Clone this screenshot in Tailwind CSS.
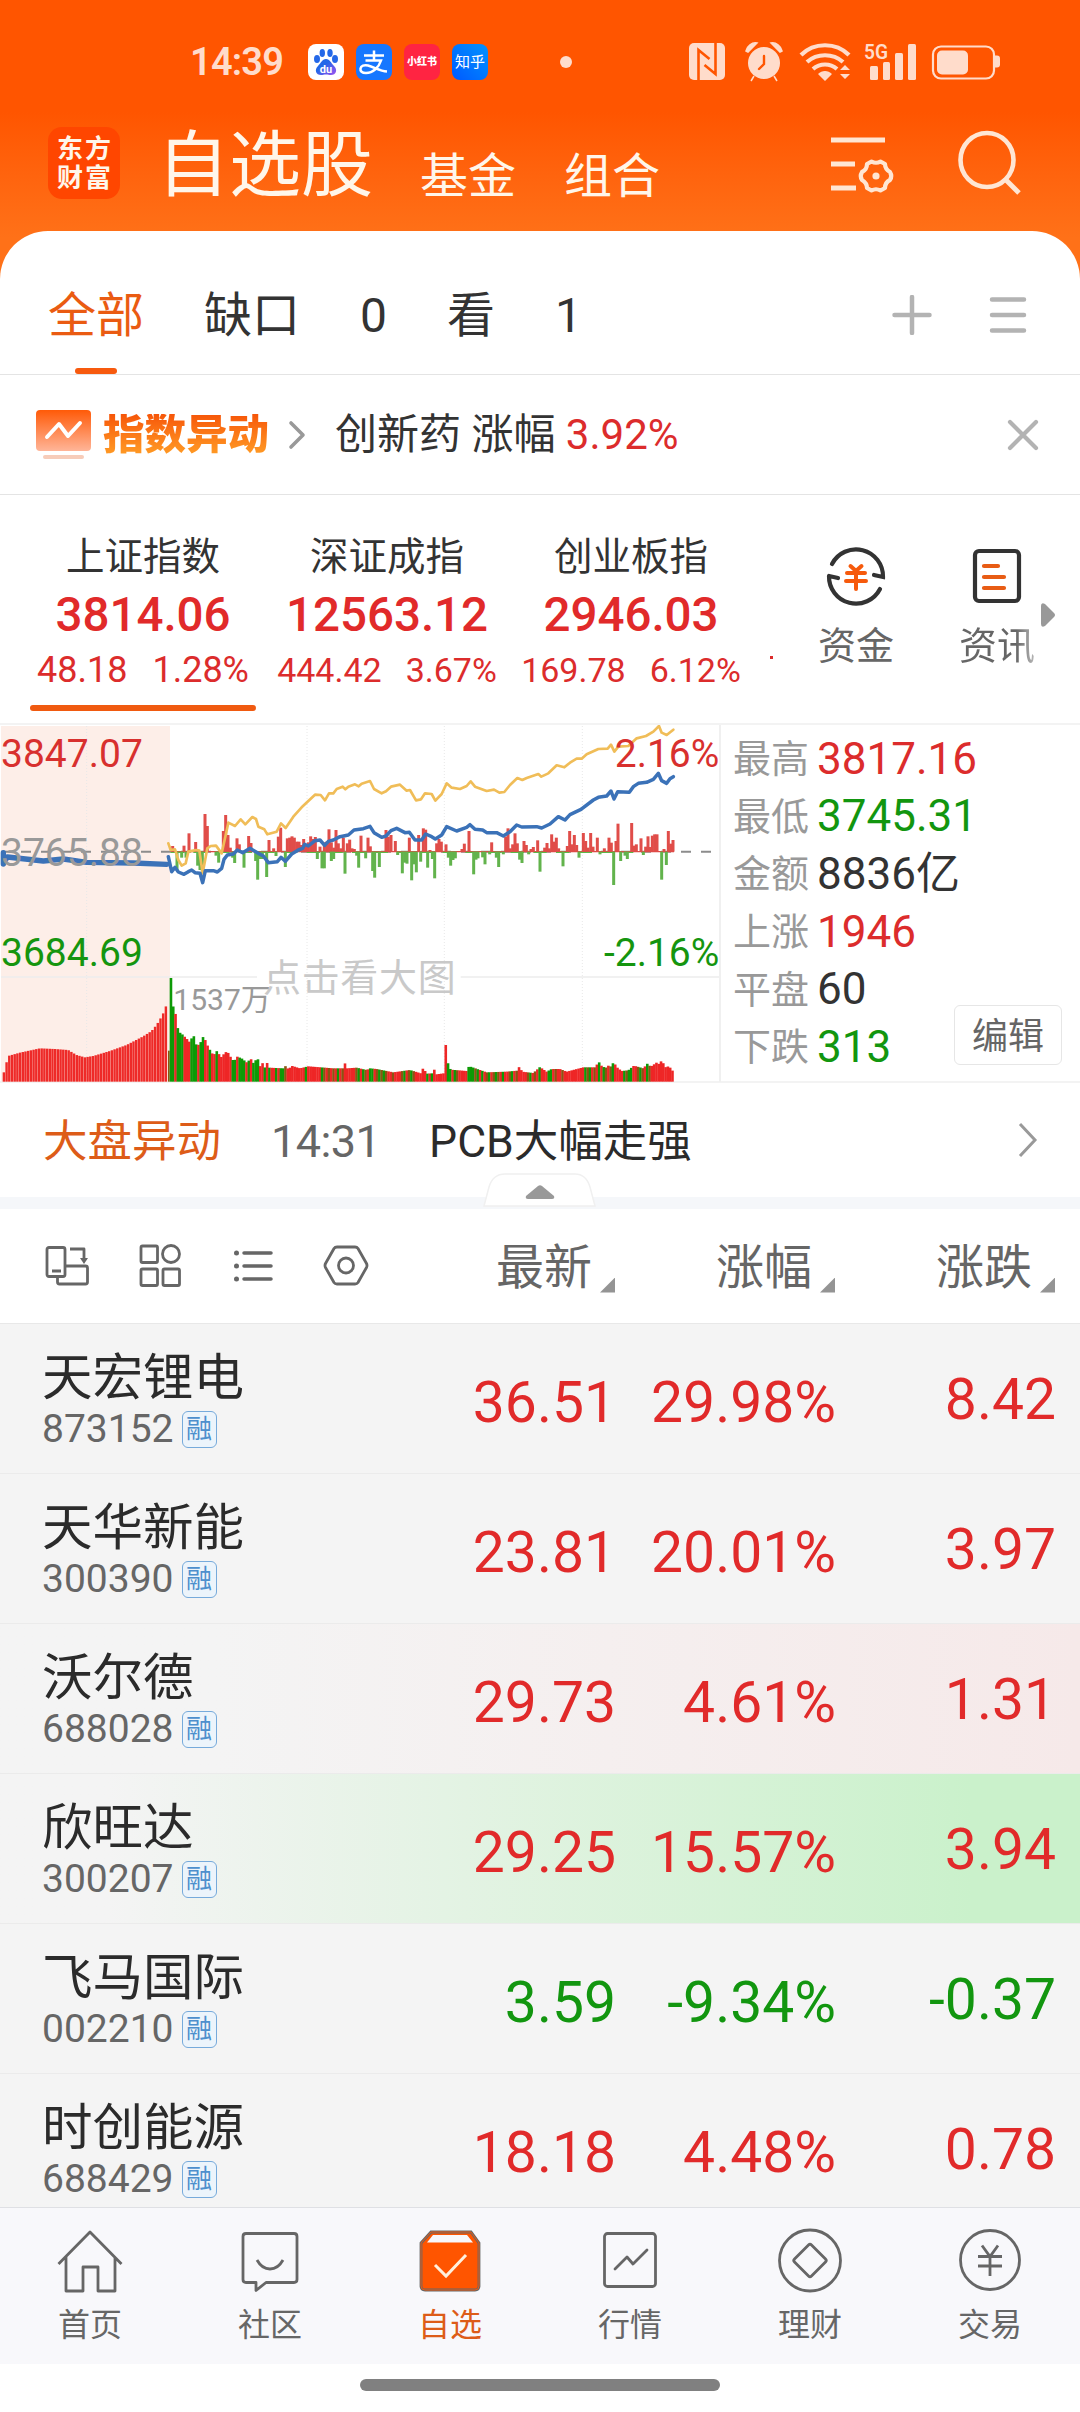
<!DOCTYPE html>
<html lang="zh-CN">
<head>
<meta charset="utf-8">
<title>自选股</title>
<script src="https://cdn.jsdelivr.net/npm/@tailwindcss/browser@4"></script>
</head>
<body class="w-[1080px] h-[2412px] overflow-hidden bg-white leading-none text-[#333] font-['Roboto','Noto_Sans_CJK_SC',sans-serif] whitespace-nowrap">
<div class="flex h-[2412px] flex-col">

<!-- status bar + header -->
<header class="h-[280px] shrink-0 bg-linear-to-b from-[#ff5500] from-40% to-[#ff7118] to-85%">
  <div class="flex h-[124px] items-center pl-[190px]">
    <div class="w-[118px] text-[38px] font-semibold tracking-[-0.8px] text-[#ffdccb]">14:39</div>
    <div class="flex gap-3">
      <svg class="size-9" viewBox="0 0 36 36"><defs><linearGradient id="bd" x1="0" y1="0" x2="1" y2="1"><stop offset=".4" stop-color="#2468e8"/><stop offset="1" stop-color="#a050f0"/></linearGradient></defs><rect width="36" height="36" rx="8" fill="#fff"/><g fill="#2468e8"><ellipse cx="9" cy="15" rx="3" ry="4"/><ellipse cx="14.300" cy="9" rx="2.700" ry="4"/><ellipse cx="22" cy="9" rx="2.700" ry="4"/><ellipse cx="27" cy="15" rx="3" ry="4"/></g><path d="M18 15c4 0 5 4 8 7 4 4 2 9-3 9-2 0-3-.5-5-.5s-3 .5-5 .5c-5 0-7-5-3-9 3-3 4-7 8-7z" fill="url(#bd)"/><text x="18" y="28.500" font-size="11" font-weight="700" text-anchor="middle" fill="#fff" font-family="Roboto">du</text></svg>
      <svg class="size-9" viewBox="0 0 36 36"><rect width="36" height="36" rx="8" fill="#1677ff"/><path d="M8 11.500h20M18 6.500v10M9.500 16.500H25C23 23 17 29 10 29c-4 0-6-2-5.500-4.500C5 22 8 20.500 12 21.500 18 23 24 27 31 27.500" fill="none" stroke="#fff" stroke-width="2.500"/></svg>
      <div class="flex size-9 items-center justify-center rounded-lg bg-[#ff2442] text-[10px] font-black text-white">小红书</div>
      <div class="flex size-9 items-center justify-center rounded-lg bg-linear-to-tr from-[#0058ff] to-[#0092ff] text-[15px] text-white">知乎</div>
    </div>
    <div class="ml-[72px] size-3 rounded-full bg-[#ffdccb]"></div>
    <svg class="ml-[117px] h-10 w-[312px] overflow-visible" viewBox="0 0 312 40" fill="#ffdccb">
      <rect y="1" width="36" height="37" rx="5"/><path d="M9.500 38V8l11 9M26.500 1v31l-11-9" fill="none" stroke="#ff5500" stroke-width="2.600"/>
      <circle cx="75" cy="21" r="16"/><path d="M75 14v8l-5 5" fill="none" stroke="#ff5500" stroke-width="2.400" stroke-linecap="round"/><path d="M57 9c1-5 6-9 11-8l-9 9zM93 9c-1-5-6-9-11-8l9 9zM65 34l-3 5M85 34l3 5" stroke="#ffdccb" stroke-width="1.500"/>
      <g fill="none" stroke="#ffdccb" stroke-width="4.200"><path d="M112 13c13-13 35-13 48 0M118 20c10-9 26-9 36 0M124 27c7-6 17-6 24 0"/></g><path d="M129 32c4-4 10-4 14 0l-7 7zM151 28l5-5 5 5zM151 32l5 5 5-5z"/>
      <text x="175" y="16.500" font-size="21" font-weight="600" font-family="Roboto" textLength="24" lengthAdjust="spacingAndGlyphs">5G</text>
      <rect x="181" y="24" width="8" height="14" rx="1.500"/><rect x="194" y="20" width="7" height="18" rx="1.500"/><rect x="206" y="11" width="8" height="27" rx="1.500"/><rect x="219" y="2" width="8" height="36" rx="1.500"/>
      <rect x="244" y="4.500" width="61" height="32" rx="8" fill="none" stroke="#ffdccb" stroke-width="2.200"/><rect x="248" y="8.500" width="31" height="24" rx="5"/><path d="M306 13.500h2q3 0 3 3v6q0 3-3 3h-2z"/>
    </svg>
  </div>
  <div class="flex h-[107px] pl-12 text-[#fff6ea]">
    <div class="mt-[3px] grid size-18 grid-cols-2 place-content-center justify-items-center gap-x-0.5 gap-y-[3px] rounded-[14px] bg-[#ff4600] px-[9px] text-[26px] font-bold"><span>东</span><span>方</span><span>财</span><span>富</span></div>
    <div class="ml-[37px] mt-[5.500px] text-[72px]">自选股</div>
    <div class="ml-[47px] mt-[29px] text-[48px]">基金</div>
    <div class="ml-12 mt-[29px] text-[48px]">组合</div>
    <svg class="ml-[171px] mt-[11px] h-[60px] w-[66px]" viewBox="0 0 66 60" fill="none" stroke="#ffe6d3" stroke-width="5"><path d="M0 5h54M0 29h24M0 53h25"/><path d="M40.500 26.500Q45 29 49.500 26.500L54 29Q54 34 59 37Q61.500 41 59 45Q54 47.500 54 53L49.500 55.500Q45 53 40.500 55.500L36 53Q36 48 31 45Q28.500 41 31 37Q36 34.500 36 29Z" stroke-width="4.200" stroke-linejoin="round"/><circle cx="45" cy="41" r="3.600" fill="#ffe6d3" stroke="none"/></svg>
    <svg class="ml-[60px] mt-[5px] h-[68px] w-[66px]" viewBox="0 0 66 68" fill="none" stroke="#ffe6d3" stroke-width="4.600"><ellipse cx="30" cy="31" rx="26.500" ry="27"/><path d="M49 51l13 13" stroke-width="5"/></svg>
  </div>
</header>

<!-- group tabs -->
<nav class="-mt-[49px] flex h-36 shrink-0 items-center rounded-t-[48px] border-b border-[#e4e4e4] bg-white pl-12 pt-6 text-[48px]">
  <div class="flex h-full items-center gap-[60px] pt-[3px]">
    <div class="relative flex h-full items-center text-[#ea5b12]">全部<i class="absolute bottom-0 left-[27px] h-1.5 w-[42px] rounded-full bg-[#f75a0e]"></i></div>
    <div>缺口</div><div>0</div><div>看</div><div>1</div>
  </div>
  <svg class="ml-[310px] size-[40px]" viewBox="0 0 40 40" stroke="#b3b3b3" stroke-width="4.500" stroke-linecap="round"><path d="M20 2v36M2.500 20h35"/></svg>
  <svg class="ml-[57px] size-[40px]" viewBox="0 0 40 40" stroke="#b3b3b3" stroke-width="4.500" stroke-linecap="round"><path d="M3 4.500h32M3 20h32M3 35.500h32"/></svg>
</nav>

<!-- index alert -->
<section class="flex h-[120px] shrink-0 items-center border-b border-[#e4e4e4] pl-9 pt-px text-[42px]">
  <svg class="h-[50px] w-[55px]" viewBox="0 0 55 50"><defs><linearGradient id="al" x2="0" y2="1"><stop stop-color="#ff5a08"/><stop offset="1" stop-color="#ffb598"/></linearGradient></defs><rect width="55" height="41" rx="4" fill="url(#al)"/><path d="M11 27l12-13 9 12 12-13" fill="none" stroke="#fff" stroke-width="4" stroke-linecap="round" stroke-linejoin="round"/><rect x="7" y="45" width="41" height="4" rx="2" fill="#f7ccb9"/></svg>
  <div class="ml-3 bg-linear-to-b from-[#f65508] to-[#ff9c25] bg-clip-text text-[41.500px] font-black text-transparent">指数异动</div>
  <svg class="ml-[19px] h-[30px] w-5" viewBox="0 0 20 30" fill="none" stroke="#999" stroke-width="3.600" stroke-linecap="round" stroke-linejoin="round"><path d="M3 3l12 12L3 27"/></svg>
  <div class="ml-[27px]">创新药 涨幅 <span class="text-[#dc2c2c]">3.92%</span></div>
  <svg class="ml-auto mr-10 size-[34px]" viewBox="0 0 34 34" stroke="#b3b3b3" stroke-width="4.200" stroke-linecap="round"><path d="M4 4l26 26M30 4L4 30"/></svg>
</section>

<!-- indices -->
<section class="flex h-[228px] shrink-0">
  <div class="flex w-[788px] pl-[21px] pt-[43px] text-[#dc2c2c]">
    <div class="flex w-[244px] flex-col items-center">
      <div class="text-[38.500px] text-[#333]">上证指数</div><div class="mt-[15px] text-[47.500px] font-medium text-[#e12a2a]">3814.06</div><div class="mt-[13px] flex gap-[25px] text-[36px]"><span>48.18</span><span>1.28%</span></div><i class="mt-[16.500px] h-1.5 w-[226px] shrink-0 rounded-full bg-[#f05a10]"></i>
    </div>
    <div class="flex w-[244px] flex-col items-center">
      <div class="text-[38.500px] text-[#333]">深证成指</div><div class="mt-[15px] text-[47.500px] font-medium text-[#e12a2a]">12563.12</div><div class="mt-[14px] flex gap-6 text-[34px]"><span>444.42</span><span>3.67%</span></div>
    </div>
    <div class="flex w-[244px] flex-col items-center">
      <div class="text-[38.500px] text-[#333]">创业板指</div><div class="mt-[15px] text-[47.500px] font-medium text-[#e12a2a]">2946.03</div><div class="mt-[14px] flex gap-6 text-[34px]"><span>169.78</span><span>6.12%</span></div>
    </div>
    <i class="ml-[17px] mt-[118px] h-[3px] w-[3px] bg-[#dc2c2c]"></i>
  </div>
  <div class="flex flex-1 pt-[49px] text-[38px] text-[#666]">
    <div class="flex w-[136px] flex-col items-center gap-[19px]">
      <svg class="size-16" viewBox="0 0 64 64" fill="none" stroke="#333" stroke-width="4.200" stroke-linecap="round"><path d="M8 20A27 27 0 0 1 59 33L50 31M5 32L14 34M5 32A27 27 0 0 0 56 45"/><path d="M26.500 22l5.500 5 5.500-5M23 29h18M22 37h20M32 27v18" stroke="#f65a0c" stroke-width="4"/></svg>
      <div>资金</div>
    </div>
    <div class="ml-[5px] flex w-[136px] flex-col items-center gap-[19px]">
      <svg class="size-16" viewBox="0 0 64 64" fill="none" stroke="#333" stroke-width="4.200" stroke-linecap="round"><rect x="10" y="7" width="44" height="50" rx="4"/><path d="M19 22h14M19 33h20M19 44h20" stroke="#e85c14"/></svg>
      <div class="bg-linear-to-r from-[#666] from-75% to-[#bbb] bg-clip-text text-transparent">资讯</div>
    </div>
    <svg class="-ml-[25px] mt-[58px] h-[26px] w-4" viewBox="0 0 16 26"><path d="M1 4q0-4 4-2l9 9q2 2 0 4l-9 9q-4 2-4-2z" fill="#999"/></svg>
  </div>
</section>

<!-- chart + figures -->
<section class="flex h-[360px] shrink-0 border-y-2 border-[#f3f3f3]">
  <svg class="h-[357px] w-[721px]" viewBox="0 15 2163 1071" font-family="Roboto, 'Noto Sans CJK SC', sans-serif">
    <rect x="3" y="18" width="507" height="1067" fill="#fdeee8"/>
    <g stroke="#e8e8e8" stroke-width="3" stroke-dasharray="3 6"><path d="M260 18V1085M921 18V1085M1333 18V1085M1747 18V1085"/></g>
    <path d="M3 771H771M1382 771H2160" stroke="#ededed" stroke-width="5"/>
    <path d="M2160 15V1086" stroke="#f0f0f0" stroke-width="6"/>
    <path d="M3 395H2140" stroke="#8c8c8c" stroke-width="6" stroke-dasharray="30 30"/>
    <g id="flow"></g>
    <g id="vol"></g>
    <g fill="none" stroke-linejoin="round" stroke-linecap="round">
      <path stroke="#f0bd58" stroke-width="8" d="M505 370L512 390 525 388 535 420 545 437 557 430 565 395 588 390 598 392 608 460 622 385 632 378 648 377 665 400 676 350 685 308 705 318 722 298 736 313 757 291 768 297 775 320 793 328 802 343 830 335 843 310 857 324 880 290 905 262 945 224 962 225 975 241 987 220 1000 220 1010 207 1028 200 1036 208 1045 200 1065 193 1076 199 1085 191 1110 183 1122 207 1145 220 1158 214 1173 200 1200 194 1220 212 1230 210 1248 241 1263 238 1275 220 1295 222 1306 242 1325 222 1340 190 1355 203 1380 207 1400 198 1412 184 1425 200 1460 213 1482 209 1498 218 1513 216 1530 195 1552 174 1567 180 1580 174 1615 162 1624 170 1645 160 1670 136 1693 142 1710 128 1730 116 1745 116 1760 103 1795 87 1823 86 1833 74 1843 95 1855 80 1885 78 1910 55 1938 48 1960 35 1977 18 1985 38 2000 45 2020 29"/>
      <path stroke="#3b72b8" stroke-width="16" d="M10 398V432M12 428L22 411 130 423 190 417 260 427 400 429 500 433"/><path stroke="#3b72b8" stroke-width="10.500" d="M505 410L515 455 525 442 535 456 552 463 565 455 575 450 585 458 600 460 608 488 616 452 640 452 652 456 665 445 672 418 682 405 700 402 712 390 728 398 750 385 775 400 790 408 805 428 832 425 843 412 856 424 875 402 895 390 908 385 914 373 925 378 945 362 960 360 974 376 985 364 1000 360 1020 350 1045 345 1062 330 1090 326 1110 319 1122 338 1145 352 1158 348 1173 332 1190 325 1215 338 1228 337 1245 360 1265 360 1277 342 1295 350 1306 357 1325 345 1340 320 1370 333 1400 322 1410 314 1425 328 1448 330 1460 338 1490 338 1510 348 1530 335 1550 315 1565 321 1610 320 1625 324 1650 312 1675 290 1695 300 1710 284 1743 268 1780 240 1795 232 1820 228 1833 213 1842 237 1853 215 1888 217 1900 200 1915 190 1940 187 1960 178 1975 160 1985 182 2000 190 2010 176 2020 170"/>
    </g>
    <g font-size="117">
      <text x="3" y="141" fill="#d8302e">3847.07</text><text x="3" y="437" fill="#999">3765.88</text><text x="3" y="738" fill="#15950f">3684.69</text>
      <text x="2158" y="141" fill="#d8302e" text-anchor="end">2.16%</text><text x="2158" y="738" fill="#15950f" text-anchor="end">-2.16%</text>
      <text x="520" y="869" font-size="90" fill="#999">1537万</text><text x="789" y="813" font-size="114" fill="#c9c9c9" textLength="578">点击看大图</text>
    </g>
  </svg>
  <div class="relative flex-1 pl-3 pt-[5px] text-[44px]">
    <dl class="grid auto-rows-[57.600px] grid-cols-[84px_auto] items-center [&_dt]:pt-px [&_dt]:text-[38px] [&_dt]:text-[#999]">
      <dt>最高</dt><dd class="text-[#dc2c2c]">3817.16</dd>
      <dt>最低</dt><dd class="text-[#12960f]">3745.31</dd>
      <dt>金额</dt><dd>8836亿</dd>
      <dt>上涨</dt><dd class="text-[#dc2c2c]">1946</dd>
      <dt>平盘</dt><dd>60</dd>
      <dt>下跌</dt><dd class="text-[#12960f]">313</dd>
    </dl>
    <button class="absolute bottom-[16px] right-[18px] flex h-[60px] w-[108px] items-center justify-center rounded-md border border-[#e6e6e6] bg-white pt-1 text-[36px] text-[#666]">编辑</button>
  </div>
</section>

<!-- market news -->
<section class="relative flex h-[126px] shrink-0 items-center border-b-12 border-[#f5f7fa] pl-[43px] text-[44.500px]">
  <div class="pt-[5px] text-[#dd5c18]">大盘异动</div><div class="ml-[50px] pt-0.5 text-[45px] tracking-[-0.6px] text-[#666]">14:31</div><div class="ml-[49px] pt-[5px] text-[#2b2b2b]">PCB大幅走强</div>
  <svg class="ml-auto mr-[42px] h-9 w-5" viewBox="0 0 20 36" fill="none" stroke="#999" stroke-width="3"><path d="M2 2l15 16L2 34"/></svg>
  <svg class="absolute -bottom-[10px] left-[483px] h-[34px] w-[113px]" viewBox="0 0 113 34"><path d="M1 33L6 14Q10 1 22 1H92Q103 1 107 14L112 33Z" fill="#fff" stroke="#f0f0f0" stroke-width="1.500"/><path d="M43 23l12-10q2-1.500 4 0l12 10q1 3-2 3H45q-3 0-2-3z" fill="#999"/></svg>
</section>

<!-- column headings -->
<section class="flex h-[115px] shrink-0 items-center border-b border-[#e8e8e8] pl-11 text-[48px] text-[#666]">
  <svg class="h-[50px] w-[330px]" viewBox="0 0 330 50" fill="none" stroke="#666" stroke-width="2.800" stroke-linejoin="round">
    <rect x="3" y="6.500" width="18" height="29" rx="2"/><path d="M8 30h9M26 8h14v11M13.500 36v5q0 2 2 2h26q2 0 2-2V27q0-2-2-2H21"/><path d="M36 17h8l-4 6z" fill="#666" stroke="none"/>
    <rect x="97" y="5" width="16.500" height="16.500" rx="1.500"/><circle cx="127" cy="13" r="8.500"/><rect x="97" y="28" width="16.500" height="16.500" rx="1.500"/><rect x="119" y="28" width="16.500" height="16.500" rx="1.500"/>
    <path d="M200 12h27M200 25h27M200 38h27" stroke-width="3.500" stroke-linecap="round"/><path d="M192.500 12h0M192.500 25h0M192.500 38h0" stroke-width="5" stroke-linecap="round"/>
    <path transform="translate(1 0)" d="M292 6h18q2 0 3 1.500l8.500 15q1 2 0 4l-8.500 15q-1 1.500-3 1.500h-18q-2 0-3-1.500l-8.500-15q-1-2 0-4l8.500-15q1-1.500 3-1.500z"/><circle cx="302" cy="24.500" r="7.500"/>
  </svg>
  <div class="ml-[122px] flex gap-[108px] pt-[3px]">
    <div class="flex w-[112px] items-end gap-2">最新<i class="mb-[-1px] h-[15px] w-[15px] shrink-0 bg-[#949494] [clip-path:polygon(100%_0,100%_100%,0_100%)]"></i></div>
    <div class="flex w-[112px] items-end gap-2">涨幅<i class="mb-[-1px] h-[15px] w-[15px] shrink-0 bg-[#949494] [clip-path:polygon(100%_0,100%_100%,0_100%)]"></i></div>
    <div class="flex w-[112px] items-end gap-2">涨跌<i class="mb-[-1px] h-[15px] w-[15px] shrink-0 bg-[#949494] [clip-path:polygon(100%_0,100%_100%,0_100%)]"></i></div>
  </div>
</section>

<main id="list" class="h-[883px] shrink-0 overflow-hidden bg-[#f4f4f4]"></main>

<!-- bottom navigation -->
<nav class="grid h-[157px] shrink-0 grid-cols-6 border-t border-[#dfe0e4] bg-[#f8f8fb] pt-[18px] text-[32px] text-[#666] [&>div]:flex [&>div]:flex-col [&>div]:items-center [&>div]:gap-[15px] [&_svg]:size-[68px] [&_svg]:fill-none [&_svg]:stroke-[#666] [&_svg]:stroke-[2.800]">
  <div><svg viewBox="0 0 68 68"><path d="M2.500 38L34 6l31.500 32M10 31v34h17V41h15v24h17V31" stroke-linejoin="round"/></svg>首页</div>
  <div><svg viewBox="0 0 68 68"><path d="M10 7.500h48q3 0 3 3v43q0 3-3 3H30l-10 8v-8H10q-3 0-3-3v-43q0-3 3-3zM21 34q5 9 13 9t13-9" stroke-linejoin="round"/></svg>社区</div>
  <div class="text-[#dd5c18]"><svg viewBox="0 0 68 68"><path d="M5 17L15 6h40l8 11v43q0 4-4 4H9q-4 0-4-4z" fill="#ff5500"/><path d="M11 16.500L17 9h34l6 7.500z" fill="#f8f8fb" stroke="none"/><path d="M19 39l11 11 20-21" stroke="#fff0dc" stroke-width="3"/><path d="M5 17L15 6h40l8 11v43q0 4-4 4H9q-4 0-4-4z" stroke="#f05a10" stroke-width="1"/></svg>自选</div>
  <div><svg viewBox="0 0 68 68"><rect x="8.500" y="7.500" width="51" height="53" rx="3"/><path d="M19 43l12-12 6 7 14-14" stroke-linecap="round" stroke-linejoin="round"/></svg>行情</div>
  <div><svg viewBox="0 0 68 68"><circle cx="34" cy="34.500" r="30.500"/><path d="M32.500 19q1.500-1.500 3 0l14 14q1.500 1.500 0 3l-14 14q-1.500 1.500-3 0l-14-14q-1.500-1.500 0-3z"/></svg>理财</div>
  <div><svg viewBox="0 0 68 68"><circle cx="34" cy="34" r="29.500"/><path d="M26 19.500l8 11 8-11M22 30.500h24M22 40h24M34 30v20"/></svg>交易</div>
</nav>
<div class="flex h-12 shrink-0 justify-center pt-[15px]"><i class="h-3 w-[360px] rounded-full bg-[#808080]"></i></div>
</div>

<script>
  // watch list rows
  const rows = [
    ['天宏锂电', '873152', '36.51', '29.98%', '8.42', ''],
    ['天华新能', '300390', '23.81', '20.01%', '3.97', ''],
    ['沃尔德', '688028', '29.73', '4.61%', '1.31', 'bg-linear-to-r from-[#f4f4f4] from-20% to-[#f6e9e9]'],
    ['欣旺达', '300207', '29.25', '15.57%', '3.94', 'bg-linear-to-r from-[#f4f4f4] from-10% to-[#caf1cb] to-90%'],
    ['飞马国际', '002210', '3.59', '-9.34%', '-0.37', ''],
    ['时创能源', '688429', '18.18', '4.48%', '0.78', '']
  ];
  document.getElementById('list').innerHTML = rows.map(([name, code, price, pct, chg, bg]) => `
    <div class="flex h-[150px] border-b border-[#ebebeb] pl-[42px] ${bg}">
      <div class="w-[330px] pt-[29px]">
        <div class="text-[50.500px] text-[#2b2b2b]">${name}</div>
        <div class="mt-[6px] flex items-center text-[39px] text-[#666]">${code}<span class="ml-2 flex h-[37px] w-[35px] items-center justify-center rounded-md border-[1.5px] border-[#76aadb] bg-[#ecf4fb] text-[26px] text-[#4d8fcd]">融</span></div>
      </div>
      <div class="flex flex-1 pt-[49.500px] text-right text-[57px] ${pct[0] === '-' ? 'text-[#12960f]' : 'text-[#e12a2a]'}">
        <div class="w-[244px]">${price}</div><div class="w-[220px]">${pct}</div><div class="-mt-[3px] w-[220px]">${chg}</div>
      </div>
    </div>`).join('');

  // chart: net flow bars, [x, height] with negative heights drawn downwards
  const flow = [518,17,552,18,567,55,587,29,615,113,622,77,670,62,677,110,684,50,691,12,711,40,718,22,746,47,753,26,760,6,807,35,821,10,835,45,842,72,862,40,869,42,876,46,883,42,890,30,897,30,904,20,911,38,918,20,925,28,932,46,939,38,946,44,960,15,973,28,980,30,987,67,994,28,1001,12,1008,65,1015,25,1022,10,1030,42,1042,25,1049,36,1056,10,1063,8,1083,48,1104,42,1111,16,1158,65,1165,45,1173,50,1186,32,1228,42,1256,50,1270,70,1277,66,1290,5,1310,25,1317,38,1324,30,1338,22,1386,8,1393,24,1407,62,1475,28,1517,45,1524,70,1531,10,1538,22,1545,55,1552,25,1572,32,1579,20,1593,8,1600,14,1613,34,1634,12,1641,26,1648,10,1655,52,1662,30,1669,42,1676,10,1702,17,1709,62,1716,22,1723,50,1730,20,1750,56,1757,32,1764,12,1772,56,1779,15,1792,42,1813,10,1827,42,1834,27,1848,32,1854,84,1895,86,1902,18,1909,22,1923,40,1937,15,1944,46,1950,14,1957,48,1964,52,1971,52,1992,8,2005,62,2012,24,2019,35,
    531,-55,545,-18,558,-18,593,-42,600,-55,607,-65,648,-12,656,-33,698,-18,704,-34,732,-48,767,-28,773,-84,780,-22,787,-22,800,-76,828,-13,856,-46,952,-22,966,-50,973,-50,994,-28,1001,-22,1035,-66,1070,-12,1076,-48,1097,-20,1118,-58,1124,-78,1138,-46,1193,-10,1207,-65,1214,-33,1221,-36,1235,-86,1242,-38,1249,-62,1262,-30,1283,-48,1297,-22,1304,-80,1345,-18,1352,-42,1359,-25,1366,-20,1421,-68,1428,-24,1434,-20,1448,-17,1455,-38,1469,-8,1489,-18,1496,-46,1510,-8,1559,-24,1566,-34,1586,-8,1620,-60,1689,-44,1737,-18,1800,-8,1841,-100,1862,-28,1875,-12,1882,-22,1930,-10,1985,-84,1999,-40];
  let s = '<path d="M512 395H2022" stroke="#dc4a45" stroke-width="4"/><path d="M512 397H1900" stroke="#5cb748" stroke-width="4" stroke-dasharray="40 28"/>';
  for (let i = 0; i < flow.length; i += 2) {
    const x = flow[i], h = flow[i + 1];
    s += `<rect x="${x - 4.5}" y="${h > 0 ? 395 - h : 395}" width="9" height="${Math.abs(h)}" fill="${h > 0 ? '#e04d49' : '#62b34c'}"/>`;
  }
  document.getElementById('flow').innerHTML = s;

  // chart: volume bars interpolated between key heights
  const at = (k, x) => { let i = 2; while (i < k.length - 2 && k[i] < x) i += 2; const t = (x - k[i - 2]) / (k[i] - k[i - 2]); return k[i - 1] + (k[i + 1] - k[i - 1]) * Math.max(0, Math.min(1, t)); };
  const pre = [12,28,20,58,28,78,60,87,120,100,165,98,205,95,230,80,255,73,280,77,330,92,380,110,430,136,455,152,470,170,485,195,495,215,502,240];
  const post = [513,311,519,228,526,208,533,162,540,147,547,142,554,135,561,128,568,120,575,130,581,139,588,112,595,110,602,118,609,134,616,125,622,110,629,97,636,85,643,82,650,92,657,83,664,74,677,89,688,85,695,65,705,65,712,75,725,70,740,58,753,68,760,56,773,71,780,45,787,57,795,42,802,57,807,42,850,40,856,47,865,38,877,47,900,40,925,46,1000,40,1030,40,1035,55,1042,40,1070,42,1100,35,1110,40,1130,38,1180,28,1230,35,1263,25,1270,42,1280,24,1297,25,1303,36,1310,22,1331,25,1337.4,110,1344.3,55,1352,36,1400,32,1407,46,1415,44,1460,28,1520,30,1552,33,1559,47,1566,30,1600,26,1620,44,1640,30,1655,38,1680,38,1700,30,1750,43,1785,43,1792,53,1799,59,1806,45,1820,42,1827,50,1834,44,1841,60,1850,44,1865,32,1885,34,1902,48,1930,40,1944,56,1951,44,1971,58,1978,52,1985,64,1992,52,1999,40,2006,48,2020,30];
  const tones = [...'GGRGGGRRRGGGRGGRRGRRGRRRRRRGGRGGGRGRGGGRRGRGRRGRGGBRRRRRRRRGRRRRRRGBRBRBRGRBRRRRRBGRGBRGGRBGBGBRRBRRRBGRBGBRRRRRGRGRRRRRGGBRGBRRRRGGGBGRGRBGRBGBRGRRBGRBRRRRBGRBRGRRRGGRBRRBRRRRRRRRRGBGRBRGRGBRBGRRRRGBGGRRBGBRGBRRR'];
  tones.splice(117, 7, 'R', 'R', 'R', 'R', 'G', 'G', 'R');
  const tone = { R: '#ee2626', G: '#0d9a06', B: '#8a5512' };
  let v = '';
  for (let x = 12; x <= 502; x += 8.1) { const h = at(pre, x); v += `<rect x="${x - 4}" y="${1085 - h}" width="7.300" height="${h}" fill="#ee2a28"/>`; }
  v += '<rect x="504" y="992" width="5" height="93" fill="#8a5512"/>';
  for (let i = 0; i < 220; i++) { const x = 513 + i * 6.87, h = at(post, x); v += `<rect x="${x - 4}" y="${1085 - h}" width="7.800" height="${h}" fill="${tone[tones[i] || 'R']}"/>`; }
  document.getElementById('vol').innerHTML = v;
</script>
</body>
</html>
